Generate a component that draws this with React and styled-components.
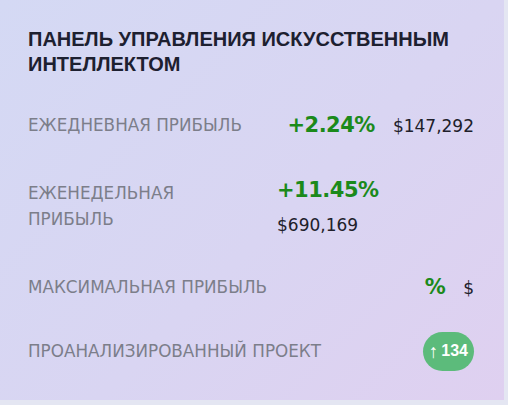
import React from "react";
import styled, { createGlobalStyle } from "styled-components";

const stats = [
  { label: "Ежедневная прибыль", percent: "+2.24%", amount: "$147,292" },
  { label: "Еженедельная прибыль", percent: "+11.45%", amount: "$690,169", stacked: true },
  { label: "Максимальная прибыль", percent: "%", amount: "$" },
];

const App = () => {
  return (
    <>
      <GlobalStyle />
      <Card>
        <Title>Панель управления искусственным интеллектом</Title>
        <List>
          {stats.map((s) => (
            <Row key={s.label}>
              <Label $narrow={s.stacked}>{s.label}</Label>
              <Values $stacked={s.stacked}>
                <Percent>{s.percent}</Percent>
                <Amount>{s.amount}</Amount>
              </Values>
            </Row>
          ))}
          <Row>
            <Label>Проанализированный проект</Label>
            <Badge>
              <Arrow>↑</Arrow>
              <span>134</span>
            </Badge>
          </Row>
        </List>
      </Card>
    </>
  );
};

const GlobalStyle = createGlobalStyle`
  body {
    margin: 0;
    background: #e4e6f2;
    font-family: "DejaVu Sans", sans-serif;
  }
`;

const Card = styled.section`
  width: 504px;
  height: 400px;
  box-sizing: border-box;
  padding: 27px 30px 0 28px;
  background: linear-gradient(135deg, #d4d9f4 0%, #d9d5f2 55%, #dfd0f0 100%);
`;

const Title = styled.h1`
  margin: 0 0 16px;
  font-family: "Liberation Sans", Arial, sans-serif;
  font-weight: 700;
  font-size: 20px;
  line-height: 25px;
  color: #1d2030;
  text-transform: uppercase;
`;

const List = styled.div`
  display: flex;
  flex-direction: column;
`;

const Row = styled.div`
  display: flex;
  align-items: center;
  justify-content: space-between;
  gap: 20px;
  min-height: 64px;
  padding: 12px 0;
  box-sizing: border-box;
`;

const Label = styled.span`
  max-width: ${(p) => (p.$narrow ? "170px" : "none")};
  font-size: 16.8px;
  line-height: 26px;
  color: #7c7e8a;
  text-transform: uppercase;
`;

const Values = styled.div`
  display: flex;
  flex-direction: ${(p) => (p.$stacked ? "column" : "row")};
  align-items: ${(p) => (p.$stacked ? "flex-start" : "baseline")};
  gap: ${(p) => (p.$stacked ? "8px" : "18px")};
  width: ${(p) => (p.$stacked ? "197px" : "auto")};
  padding: ${(p) => (p.$stacked ? "6px 0" : "0")};
`;

const Percent = styled.span`
  font-weight: 700;
  font-size: 21px;
  line-height: 30px;
  letter-spacing: -0.5px;
  color: #1b8a1b;
`;

const Amount = styled.span`
  font-size: 17px;
  line-height: 24px;
  color: #20202a;
`;

const Badge = styled.span`
  display: inline-flex;
  align-items: center;
  gap: 3px;
  height: 39px;
  padding: 0 6px 0 6px;
  border-radius: 20px;
  background: #5cbb7b;
  color: #fff;
  font-family: "Liberation Sans", Arial, sans-serif;
  font-weight: 700;
  font-size: 16px;
`;

const Arrow = styled.span`
  font-weight: 400;
  font-size: 19px;
  line-height: 1;
`;

export default App;
